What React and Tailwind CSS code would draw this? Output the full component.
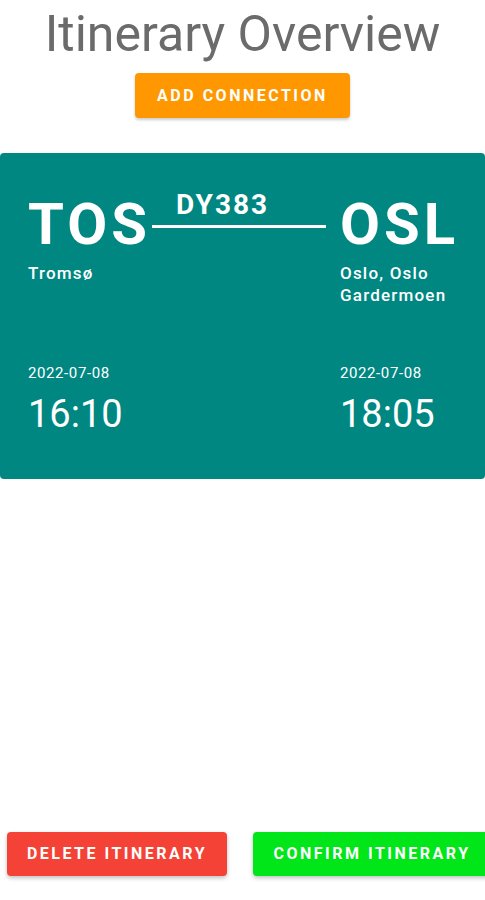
export default function App() {
  return (
    <div className="w-[485px] h-[900px] bg-white flex flex-col font-['Roboto',sans-serif] overflow-hidden">
      <h1 className="text-center text-[50px] leading-[60px] text-[#6b6b6b] font-normal pt-[4px]">Itinerary Overview</h1>
      <div className="flex justify-center mt-[9px]">
        <button className="w-[215px] h-[45px] rounded-[4px] bg-[#ff9800] text-white text-[16px] font-bold tracking-[2.5px] shadow-[0_2px_3px_rgba(0,0,0,0.2)]">
          ADD CONNECTION
        </button>
      </div>

      <FlightCard />

      <div className="flex-1" />
      <div className="flex gap-[26px] pl-[7px] pb-[24px]">
        <button className="w-[220px] h-[44px] shrink-0 rounded-[4px] bg-[#f44336] text-white text-[16px] font-bold tracking-[2.5px] shadow-[0_2px_4px_rgba(0,0,0,0.25)]">
          DELETE ITINERARY
        </button>
        <button className="w-[238px] h-[44px] shrink-0 rounded-[4px] bg-[#00e618] text-white text-[16px] font-bold tracking-[2.5px] shadow-[0_2px_4px_rgba(0,0,0,0.25)]">
          CONFIRM ITINERARY
        </button>
      </div>
    </div>
  );
}

function FlightCard() {
  return (
    <div className="mt-[35px] h-[326px] bg-[#008782] rounded-[4px] text-white pl-[28px] pr-[28px] pt-[38px]">
      <div className="flex items-start">
        <div className="w-[124px] shrink-0">
          <div className="text-[58px] font-bold leading-[66px] tracking-[4px]">TOS</div>
          <div className="text-[17px] font-medium leading-[22px] tracking-[1.2px] mt-[5px]">Tromsø</div>
        </div>
        <div className="flex-1 mr-[14px] -mt-[2px]">
          <div className="text-[28px] font-bold leading-[32px] tracking-[2px] pl-[24px]">DY383</div>
          <div className="w-full h-[3px] bg-white mt-[4px]" />
        </div>
        <div className="w-[117px] shrink-0">
          <div className="text-[58px] font-bold leading-[66px] tracking-[4px]">OSL</div>
          <div className="text-[17px] font-medium leading-[22px] tracking-[1.2px] mt-[5px]">Oslo, Oslo<br />Gardermoen</div>
        </div>
      </div>
      <div className="flex justify-between mt-[58px]">
        <TimeBlock date="2022-07-08" time="16:10" />
        <div className="w-[117px]">
          <TimeBlock date="2022-07-08" time="18:05" />
        </div>
      </div>
    </div>
  );
}

function TimeBlock(props) {
  return (
    <div>
      <div className="text-[15px] leading-[18px] tracking-[0.6px]">{props.date}</div>
      <div className="text-[38px] leading-[44px] mt-[10px]">{props.time}</div>
    </div>
  );
}
